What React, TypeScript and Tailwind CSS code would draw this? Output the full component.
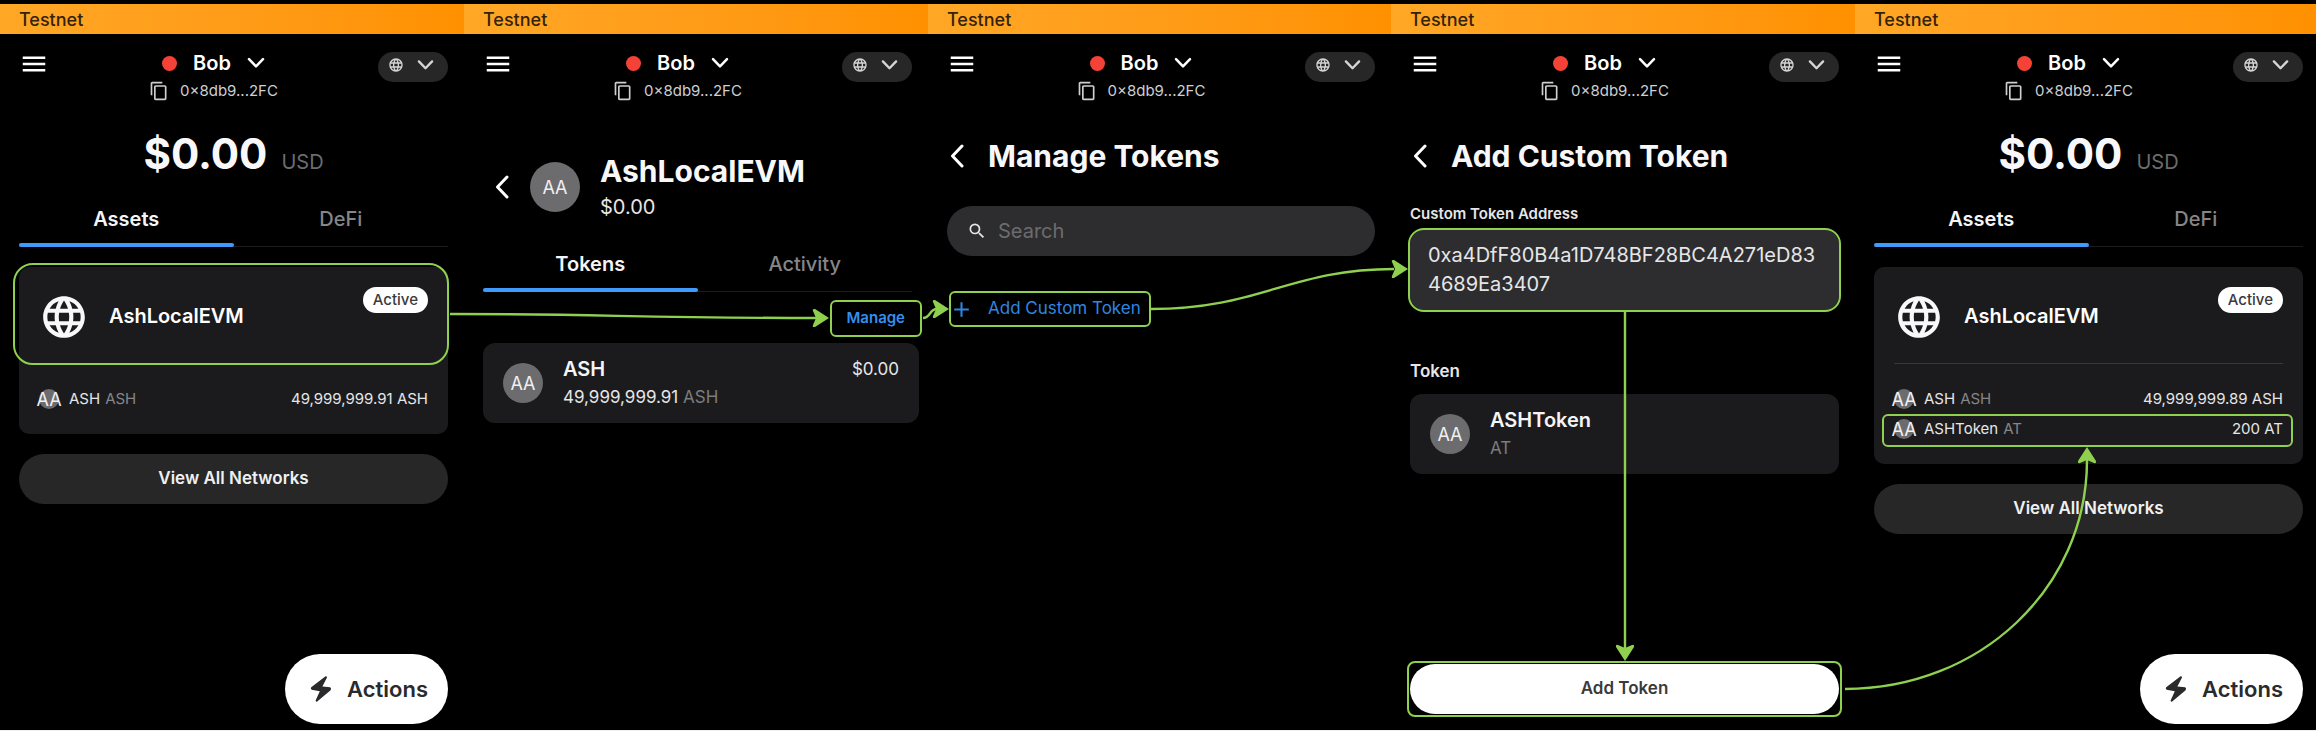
import type { ReactNode } from "react";
import { MdAdd, MdContentCopy, MdLanguage, MdMenu, MdSearch } from "react-icons/md";

function ChevronDown({ className }: { className: string }) {
  return (
    <svg viewBox="0 0 18 12" className={className} fill="none" stroke="currentColor" strokeWidth="2.5" strokeLinecap="round" strokeLinejoin="round" aria-hidden="true">
      <path d="M2 2.2 L9 9.4 L16 2.2" />
    </svg>
  );
}

function BackButton() {
  return (
    <button type="button" aria-label="Back" className="flex shrink-0 items-center text-white">
      <svg viewBox="0 0 14 26" className="h-[26px] w-[14px]" fill="none" stroke="currentColor" strokeWidth="3" strokeLinecap="round" strokeLinejoin="round" aria-hidden="true">
        <path d="M12 3 L2.5 13 L12 23" />
      </svg>
    </button>
  );
}

function Bolt() {
  return (
    <svg viewBox="0 0 22 28" className="h-7 w-[22px]" fill="currentColor" aria-hidden="true">
      <path d="M15.6 1.2 L1.2 12.2 Q0.2 13.6 1.6 14.8 L9.8 16.2 L5.6 25.4 Q5.8 27 7.2 26.6 L20.6 15.2 Q21.8 13.4 20.2 12.2 L12.4 11.4 L17 2.6 Q16.8 0.8 15.6 1.2 Z" />
    </svg>
  );
}

function Highlight({ className }: { className: string }) {
  return <span aria-hidden="true" className={`pointer-events-none absolute z-10 border-2 border-[#8fd14f] ${className}`} />;
}

function Header() {
  return (
    <header className="mt-[15px] flex items-start justify-between">
      <button type="button" aria-label="Menu">
        <MdMenu size={30} />
      </button>
      <div className="flex flex-col items-center gap-1">
        <button type="button" className="flex h-7 items-center gap-4 text-xl font-semibold">
          <span className="size-[15px] rounded-full bg-[#f44336]" />
          Bob
          <ChevronDown className="h-3 w-[18px]" />
        </button>
        <button type="button" className="flex h-5 items-center gap-[11px] text-[15px] text-[#cfcfd1]">
          <MdContentCopy size={20} />
          0×8db9...2FC
        </button>
      </div>
      <button type="button" aria-label="Select network" className="mt-[3px] flex h-[30px] w-[70px] items-center justify-between rounded-full bg-[#272728] pr-[14px] pb-[5px] pl-[10px] text-[#d6d6d8]">
        <MdLanguage size={16} />
        <ChevronDown className="h-3 w-[17px]" />
      </button>
    </header>
  );
}

function Screen({ children, className = "pr-[16px]" }: { children: ReactNode; className?: string }) {
  return (
    <section className="flex flex-col">
      <div className="flex h-[30px] items-center bg-linear-to-r from-[#ffa726] to-[#ff9100] pl-[19px] text-[18px] font-medium text-[#33230a]">Testnet</div>
      <div className={`flex grow flex-col pl-[19px] ${className}`}>
        <Header />
        {children}
      </div>
    </section>
  );
}

function Tabs({ items }: { items: [string, string] }) {
  return (
    <div role="tablist" className="flex border-b border-[#1b1b1d] text-xl">
      <button type="button" role="tab" aria-selected="true" className="relative -mb-px h-[46px] flex-1 pb-[10px] font-semibold text-[#f5f5f7]">
        {items[0]}
        <span className="absolute inset-x-0 bottom-0 h-1 rounded-xs bg-[#3e9bfb]" />
      </button>
      <button type="button" role="tab" aria-selected="false" className="-mb-px h-[46px] flex-1 pb-[10px] font-medium text-[#868688]">
        {items[1]}
      </button>
    </div>
  );
}

function Avatar({ className }: { className: string }) {
  return <span className={`flex shrink-0 items-center justify-center rounded-full bg-[#6c6c6e] text-[18px] text-[#f0f0f2] ${className}`}>AA</span>;
}

type Holding = { name: string; symbol: string; amount: string; marked?: boolean };

function Portfolio({ holdings, marked }: { holdings: Holding[]; marked?: boolean }) {
  return (
    <>
      <div className="mt-[29px] flex items-baseline justify-center gap-[14px] leading-[48px]">
        <span className="text-[42px] font-bold text-[#f8f8fa]">$0.00</span>
        <span className="text-xl text-[#6c6c6e]">USD</span>
      </div>
      <div className="mt-[23px]">
        <Tabs items={["Assets", "DeFi"]} />
      </div>
      <article className="mt-5 rounded-[10px] bg-[#1b1b1d]">
        <div className="relative px-5 pt-5 pb-4">
          <div className="flex h-[60px] items-center gap-5">
            <MdLanguage size={50} className="text-[#f8f8fa]" />
            <h2 className="grow pb-0.5 text-xl font-semibold">AshLocalEVM</h2>
            <span className="flex h-[26px] items-center self-start rounded-full bg-white px-[10px] text-[15px] font-medium text-[#3a3a3c]">Active</span>
          </div>
          {marked && <Highlight className="-top-1 -right-px -bottom-0.5 -left-1.5 rounded-[20px]" />}
        </div>
        <ul className="mx-5 border-t border-[#38383a] py-5 text-[15px] text-[#e6e6e8]">
          {holdings.map((h) => (
            <li key={h.name} className="relative flex h-[30px] items-center">
              <Avatar className="size-5" />
              <span className="ml-[10px]">{h.name}</span>
              <span className="ml-[5px] grow text-[#868688]">{h.symbol}</span>
              <span>{h.amount}</span>
              {h.marked && <Highlight className="top-0 -right-[10px] -bottom-[3px] -left-3 rounded-md" />}
            </li>
          ))}
        </ul>
      </article>
      <button type="button" className="mt-5 h-[50px] rounded-full bg-[#272727] text-[17px] font-semibold text-[#f0f0f2]">
        View All Networks
      </button>
      <button type="button" className="mt-auto mb-1.5 flex h-[70px] items-center gap-[15px] self-end rounded-full bg-white pr-5 pl-[25px] text-[22px] font-semibold text-[#2a2a2c]">
        <Bolt />
        Actions
      </button>
    </>
  );
}

function NetworkScreen() {
  return (
    <Screen>
      <div className="mt-[52px] flex items-center">
        <span className="ml-3 flex">
          <BackButton />
        </span>
        <Avatar className="ml-[21px] size-[50px]" />
        <div className="ml-5 flex flex-col gap-1">
          <h1 className="text-[30px] leading-9 font-bold text-[#f8f8fa]">AshLocalEVM</h1>
          <p className="text-xl leading-7 text-[#e6e6e8]">$0.00</p>
        </div>
      </div>
      <div className="mt-[25px]">
        <Tabs items={["Tokens", "Activity"]} />
      </div>
      <button type="button" className="relative mt-2 h-[37px] self-end px-[7px] text-[15px] font-semibold text-[#338fee]">
        Manage
        <Highlight className="-inset-x-[10px] inset-y-0 rounded-md" />
      </button>
      <article className="mt-1.5 -mr-[7px] flex items-center gap-5 rounded-xl bg-[#1b1b1d] px-5 py-[14px]">
        <Avatar className="size-10" />
        <div className="flex grow flex-col gap-1">
          <h2 className="text-xl leading-6 font-semibold text-[#f5f5f7]">ASH</h2>
          <p className="text-[17px] leading-6 text-[#e6e6e8]">
            49,999,999.91 <span className="text-[#7c7c7e]">ASH</span>
          </p>
        </div>
        <p className="self-start text-[17px] leading-6 text-[#e6e6e8]">$0.00</p>
      </article>
    </Screen>
  );
}

function TitleRow({ title }: { title: string }) {
  return (
    <div className="mt-[37px] flex items-center gap-6 pl-[3px]">
      <BackButton />
      <h1 className="text-[30px] leading-9 font-bold text-[#f8f8fa]">{title}</h1>
    </div>
  );
}

function ManageTokensScreen() {
  return (
    <Screen>
      <TitleRow title="Manage Tokens" />
      <label className="mt-8 flex h-[50px] items-center gap-[11px] rounded-full bg-[#2d2d2f] px-5 text-[#e6e6e8]">
        <MdSearch size={20} />
        <input type="search" aria-label="Search" placeholder="Search" className="min-w-0 grow bg-transparent text-xl outline-none placeholder:text-[#6c6c6e]" />
      </label>
      <button type="button" className="relative mt-[35px] flex h-9 items-center gap-[14px] self-start pr-2 pl-0.5 text-[17px] text-[#2f86e2]">
        <MdAdd size={25} />
        Add Custom Token
        <Highlight className="inset-y-0 -right-0.5 left-0.5 rounded-md" />
      </button>
    </Screen>
  );
}

function AddTokenScreen() {
  return (
    <Screen>
      <TitleRow title="Add Custom Token" />
      <label htmlFor="token-address" className="mt-[30px] text-[15px] leading-5 font-semibold text-[#e6e6e8]">
        Custom Token Address
      </label>
      <div className="relative mt-[5px] flex">
        <textarea
          id="token-address"
          rows={2}
          spellCheck={false}
          defaultValue="0xa4DfF80B4a1D748BF28BC4A271eD834689Ea3407"
          className="grow resize-none overflow-hidden rounded-2xl bg-[#2d2d2f] px-[18px] py-3 text-xl leading-[29px] break-all text-[#e6e6e8] outline-none"
        />
        <Highlight className="-inset-x-0.5 -inset-y-px rounded-2xl" />
      </div>
      <h2 className="mt-12 text-[17px] leading-6 font-semibold text-[#e6e6e8]">Token</h2>
      <article className="mt-[11px] flex items-center gap-5 rounded-xl bg-[#1b1b1d] px-5 py-[14px]">
        <Avatar className="size-10" />
        <div className="flex flex-col gap-1">
          <h3 className="text-xl leading-6 font-semibold text-[#f5f5f7]">ASHToken</h3>
          <p className="text-[17px] leading-6 text-[#7c7c7e]">AT</p>
        </div>
      </article>
      <button type="button" className="relative mt-auto mb-4 h-[50px] rounded-full bg-white text-[17px] font-semibold text-[#3a3a3c]">
        Add Token
        <Highlight className="-inset-x-[3px] -inset-y-[3px] rounded-lg" />
      </button>
    </Screen>
  );
}

const HEAD = "M0 0 L-14 -9 Q-17 -9.5 -16 -7 L-13 0 L-16 7 Q-17 9.5 -14 9 Z";

const CONNECTORS = [
  { path: "M450 314 C600 314 640 318 816 318", head: "translate(829 318)" },
  { path: "M923 318 C931 318 929 309 937 309", head: "translate(949 309)" },
  { path: "M1151 309 C1260 309 1290 269 1394 269", head: "translate(1408 269)" },
  { path: "M1625 312 V648", head: "translate(1625 661) rotate(90)" },
  { path: "M1845 689 C1980 689 2087 588 2087 460", head: "translate(2087 447) rotate(-90)" },
];

function Connectors() {
  return (
    <svg viewBox="0 0 2316 730" preserveAspectRatio="none" className="pointer-events-none absolute inset-0 size-full" aria-hidden="true">
      {CONNECTORS.map((c) => (
        <g key={c.path}>
          <path d={c.path} fill="none" stroke="#8fd14f" strokeWidth="2.4" />
          <path d={HEAD} transform={c.head} fill="#8fd14f" />
        </g>
      ))}
    </svg>
  );
}

export default function App() {
  return (
    <main className="relative grid min-h-screen grid-cols-[464fr_464fr_463fr_464fr_461fr] border-b border-[#f0f0f0] bg-black pt-1 font-['Inter',sans-serif] text-white">
      <Screen>
        <Portfolio marked holdings={[{ name: "ASH", symbol: "ASH", amount: "49,999,999.91 ASH" }]} />
      </Screen>
      <NetworkScreen />
      <ManageTokensScreen />
      <AddTokenScreen />
      <Screen className="pr-[13px]">
        <Portfolio
          holdings={[
            { name: "ASH", symbol: "ASH", amount: "49,999,999.89 ASH" },
            { name: "ASHToken", symbol: "AT", amount: "200 AT", marked: true },
          ]}
        />
      </Screen>
      <Connectors />
    </main>
  );
}
